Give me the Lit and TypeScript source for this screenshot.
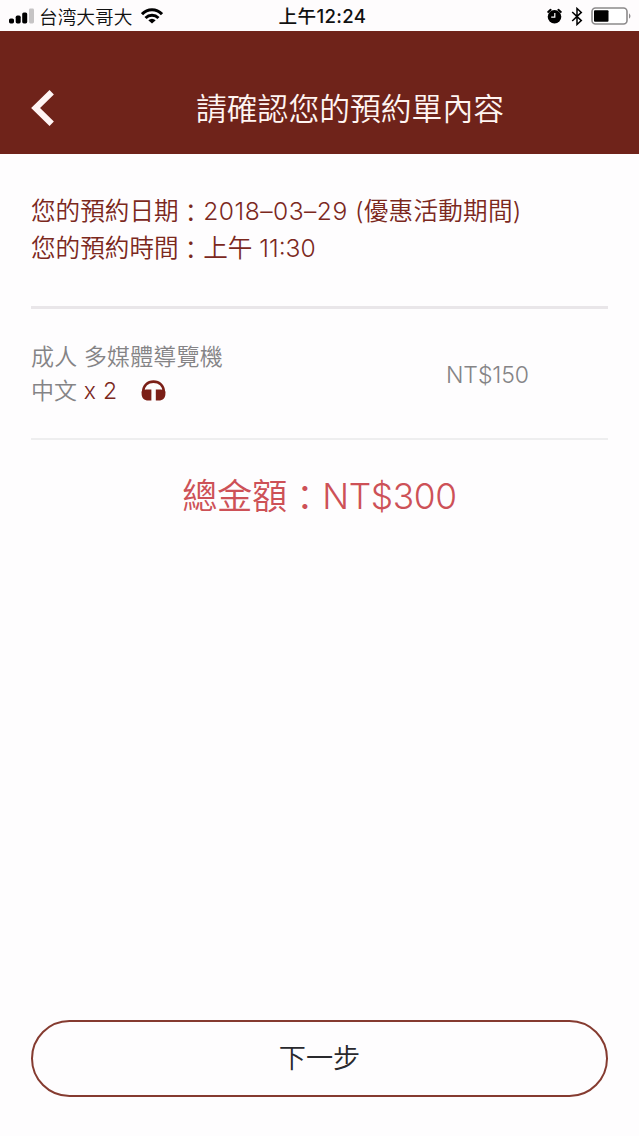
import { LitElement, html, css } from "lit";
import { customElement } from "lit/decorators.js";

@customElement("status-bar")
class StatusBar extends LitElement {
  static styles = css`
    :host { display: grid; grid-template-columns: 1fr auto 1fr; align-items: center; height: 31px; padding: 0 7px 0 9px; box-sizing: border-box; background: #fefcfd; color: #111; }
    .left, .right { display: flex; align-items: center; }
    .right { justify-content: flex-end; }
    .carrier { font-size: 18.7px; font-weight: 350; line-height: 29px; padding-bottom: 2px; margin: 0 9px 0 5px; font-family: "Noto Sans CJK SC", sans-serif; }
    .time { font: 500 18.6px/31px Inter, "Noto Sans CJK TC", sans-serif; letter-spacing: 0.35px; padding: 1px 0 0 4px; }
    svg { display: block; }
    .clock, .bt { margin-right: 8.5px; }
  `;
  render() {
    return html`
      <div class="left">
        <svg width="25" height="16" viewBox="0 0 25 16">
          <rect x="0" y="10.4" width="5" height="5" rx="1.6" fill="#000" />
          <rect x="6.7" y="7.6" width="5" height="7.8" rx="1.6" fill="#000" />
          <rect x="13.2" y="4.4" width="5" height="11" rx="1.6" fill="#000" />
          <rect x="20" y="0.6" width="5" height="14.8" rx="1.4" fill="#c6c4c5" />
        </svg>
        <span class="carrier">台湾大哥大</span>
        <svg width="22" height="16" viewBox="0 0 22 16" fill="none" stroke="#000" stroke-width="3">
          <path d="M1 6.2 C6.5 .2 15.5 .2 21 6.2" />
          <path d="M4.5 10 C8.2 6.4 13.8 6.4 17.5 10" />
          <path d="M11 15.5 L7.3 12.2 Q11 9.2 14.7 12.2 Z" fill="#000" stroke="none" />
        </svg>
      </div>
      <span class="time">上午12:24</span>
      <div class="right">
        <svg class="clock" width="15" height="17" viewBox="0 0 15 17">
          <circle cx="7.5" cy="8.8" r="6.8" fill="#000" />
          <path d="M1.2 3.9 L3.6 1.8 M13.8 3.9 L11.4 1.8" stroke="#000" stroke-width="2" stroke-linecap="round" />
          <path d="M7.8 5 V9.2 H4.2" fill="none" stroke="#fff" stroke-width="1.2" />
        </svg>
        <svg class="bt" width="12" height="19" viewBox="0 0 12 19" fill="none" stroke="#000" stroke-width="1.5">
          <path d="M1.2 5 L10.3 13.6 L6 17.5 V1.5 L10.3 5.4 L1.2 14" />
        </svg>
        <svg width="41" height="18" viewBox="0 0 41 18">
          <rect x="1" y="1" width="35" height="16" rx="3.5" fill="#fff" stroke="#8c8a8b" stroke-width="1.6" />
          <rect x="3" y="3.2" width="14.5" height="11.6" rx="1" fill="#000" />
          <path d="M38 6.2 Q41 9 38 11.8 Z" fill="#8c8a8b" />
        </svg>
      </div>
    `;
  }
}

@customElement("app-root")
class AppRoot extends LitElement {
  static styles = css`
    :host { display: flex; flex-direction: column; height: 1136px; box-sizing: border-box; background: #fefdfe; font-family: Inter, "Noto Sans CJK TC", sans-serif; font-weight: 350; }
    .header { display: grid; grid-template-columns: 24px 1fr; align-items: center; height: 123px; box-sizing: border-box; padding: 31px 31px 0; background: #6f231a; color: #fff5f2; }
    .header svg { display: block; }
    .title { margin: 0; padding: 2px 0 0 37px; text-align: center; font-size: 30.8px; line-height: 44px; font-weight: 350; white-space: nowrap; }
    .content { display: flex; flex-direction: column; flex: 1; padding: 0 31px 39px; }
    .dates { height: 152px; box-sizing: border-box; padding-top: 39px; color: #7b281d; font-size: 24.6px; line-height: 37px; }
    .line { display: flex; white-space: pre; }
    .date { letter-spacing: 0.5px; }
    .note { letter-spacing: 0.25px; }
    .item { display: flex; height: 134px; box-sizing: border-box; border-top: 3px solid #e9e6e9; padding-top: 32px; border-bottom: 2px solid #eeeeef; color: #858486; font-size: 23px; line-height: 33.5px; }
    .desc { width: 415px; }
    .name { letter-spacing: 0.15px; }
    .qty { display: flex; align-items: center; white-space: pre; }
    .count { color: #7b281d; letter-spacing: 0.3px; }
    .qty svg { margin-left: 24px; }
    .price { line-height: 68px; letter-spacing: -0.1px; }
    .total { margin-top: 31px; text-align: center; color: #cd5157; font-size: 35.3px; letter-spacing: -0.3px; line-height: 52px; white-space: nowrap; }
    .next { margin-top: auto; height: 77px; box-sizing: border-box; border: 2px solid #853b30; border-radius: 39px; background: transparent; color: #29292d; font: inherit; font-size: 27.2px; line-height: 73px; padding: 0; }
    .colon { position: relative; top: 1.5px; }
  `;
  render() {
    return html`
      <status-bar></status-bar>
      <header class="header">
        <svg width="24" height="38" viewBox="0 0 24 38"><path d="M20.7 3.3 L4.6 19 L20.7 34.7" fill="none" stroke="#fff5f5" stroke-width="6.2" /></svg>
        <h1 class="title">請確認您的預約單內容</h1>
      </header>
      <main class="content">
        <section class="dates">
          <div class="line"><span>您的預約日期<span class="colon">：</span></span><span class="date">2018–03–29</span><span class="note"> (優惠活動期間)</span></div>
          <div class="line"><span>您的預約時間<span class="colon">：</span></span><span>上午</span><span class="hour"> 11:30</span></div>
        </section>
        <section class="item">
          <div class="desc">
            <div class="name">成人 多媒體導覽機</div>
            <div class="qty"><span>中文</span><span class="count"> x 2</span>
              <svg width="25" height="24" viewBox="0 0 25 24" fill="#7b1f17">
                <path d="M2.2 14 V12.6 C2.2 6.6 6.6 2.6 12.5 2.6 S22.8 6.6 22.8 12.6 V14" fill="none" stroke="#7b1f17" stroke-width="2.6" />
                <path d="M10.4 10.6 V21.6 H7.4 C3 21.6 .6 18.6 .6 15 V12.4 C2 11 4.5 10.6 6.5 10.6 Z" />
                <path d="M14.8 10.6 V21.6 H17.6 C22 21.6 24.4 18.6 24.4 15 V12.4 C23 11 20.5 10.6 18.5 10.6 Z" />
              </svg></div>
          </div>
          <div class="price">NT$150</div>
        </section>
        <div class="total">總金額<span class="colon">：</span>NT$300</div>
        <button class="next">下一步</button>
      </main>
    `;
  }
}
